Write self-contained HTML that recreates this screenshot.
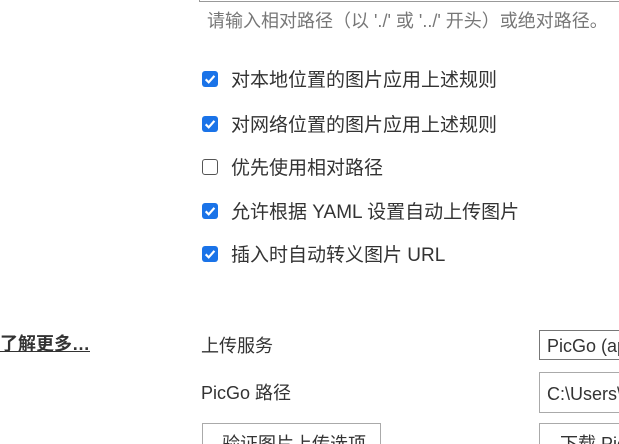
<!DOCTYPE html>
<html><head><meta charset="utf-8"><style>
html,body{margin:0;width:619px;height:444px;overflow:hidden}
body{background:#fff;font-family:"Liberation Sans","Noto Sans CJK SC",sans-serif;color:#333;position:relative}
.a{position:absolute;white-space:nowrap;line-height:1}
.cb{position:absolute;left:202px;width:16px;height:16px;border-radius:3px;background:#1a73e8;box-sizing:border-box}
.cb svg{position:absolute;left:1px;top:1px}
.un{background:#fff;border:1.5px solid #555}
.lbl{position:absolute;left:231px;font-size:19px;line-height:1;color:#333;white-space:nowrap}
.box{position:absolute;border:1px solid #aaa;border-right:none;box-sizing:border-box;background:#fff}
.clip{position:absolute;left:0;top:0;width:619px;height:444px;overflow:hidden}
</style></head><body><div class="clip">
<div class="box" style="left:199px;top:-20px;width:420px;height:22px;border-color:#999"></div>
<div class="a" style="left:207px;top:12px;font-size:18px;color:#777">请输入相对路径（以 './' 或 '../' 开头）或绝对路径。</div>

<div class="cb" style="top:71px"><svg width="14" height="14" viewBox="0 0 13 13"><path d="M2.5 6.8l2.8 2.8 5.3-6" stroke="#fff" stroke-width="2" fill="none"/></svg></div>
<div class="lbl" style="top:71px">对本地位置的图片应用上述规则</div>
<div class="cb" style="top:116px"><svg width="14" height="14" viewBox="0 0 13 13"><path d="M2.5 6.8l2.8 2.8 5.3-6" stroke="#fff" stroke-width="2" fill="none"/></svg></div>
<div class="lbl" style="top:116px">对网络位置的图片应用上述规则</div>
<div class="cb un" style="top:159px"></div>
<div class="lbl" style="top:159px">优先使用相对路径</div>
<div class="cb" style="top:203px"><svg width="14" height="14" viewBox="0 0 13 13"><path d="M2.5 6.8l2.8 2.8 5.3-6" stroke="#fff" stroke-width="2" fill="none"/></svg></div>
<div class="lbl" style="top:203px">允许根据 YAML 设置自动上传图片</div>
<div class="cb" style="top:246px"><svg width="14" height="14" viewBox="0 0 13 13"><path d="M2.5 6.8l2.8 2.8 5.3-6" stroke="#fff" stroke-width="2" fill="none"/></svg></div>
<div class="lbl" style="top:246px">插入时自动转义图片 URL</div>

<div class="a" style="left:0;top:335px;font-size:18px;font-weight:bold;text-decoration:underline;color:#333">了解更多…</div>
<div class="a" style="left:201px;top:337px;font-size:18px">上传服务</div>
<div class="a" style="left:201px;top:384px;font-size:18px">PicGo 路径</div>
<div class="box" style="left:539px;top:330px;width:80px;height:30px;border-color:#777"></div>
<div class="a" style="left:547px;top:337px;font-size:18px">PicGo (ap</div>
<div class="box" style="left:539px;top:372px;width:80px;height:41px"></div>
<div class="a" style="left:547px;top:385px;font-size:18px">C:\Users\</div>
<div class="box" style="left:202px;top:423px;width:179px;height:30px;border-right:1px solid #aaa;border-bottom:none"></div>
<div class="a" style="left:222px;top:435px;font-size:18px">验证图片上传选项</div>
<div class="box" style="left:539px;top:423px;width:80px;height:30px;border-bottom:none"></div>
<div class="a" style="left:560px;top:435px;font-size:18px">下载 PicGo</div>
</div></body></html>
